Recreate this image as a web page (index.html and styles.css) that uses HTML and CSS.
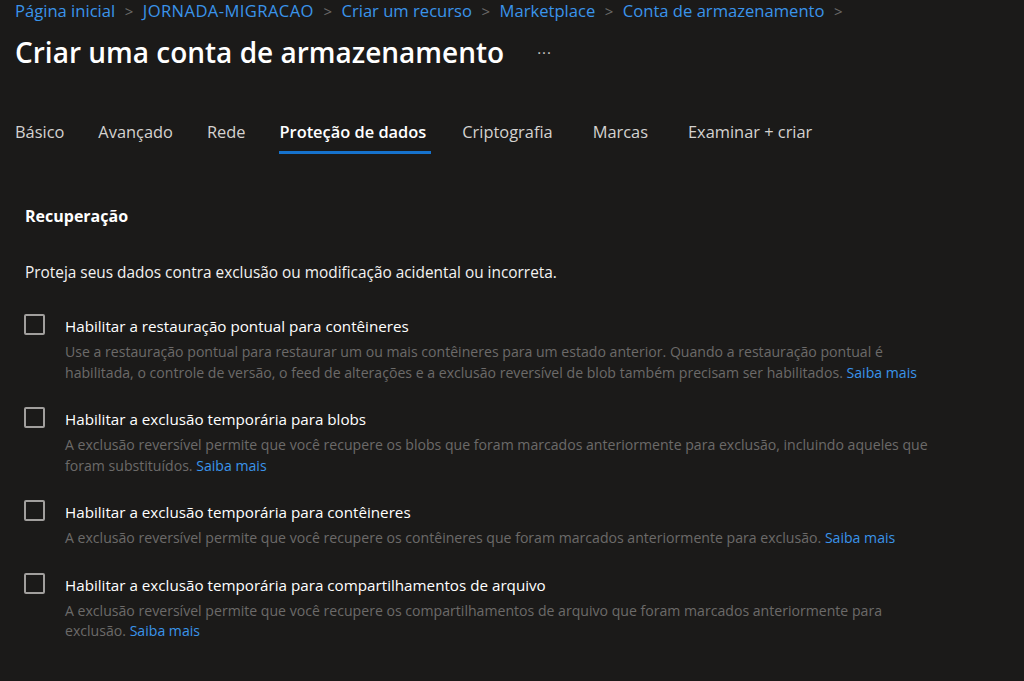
FILE: index.html
```html
<!DOCTYPE html>
<html lang="pt-BR">
<head>
<meta charset="utf-8">
<title>Criar uma conta de armazenamento</title>
<link rel="stylesheet" href="styles.css">
</head>
<body>
<div class="page">
  <nav class="crumbs">
    <a class="crumb">Página inicial</a><span class="sep">&gt;</span>
    <a class="crumb caps">JORNADA-MIGRACAO</a><span class="sep">&gt;</span>
    <a class="crumb">Criar um recurso</a><span class="sep">&gt;</span>
    <a class="crumb">Marketplace</a><span class="sep">&gt;</span>
    <a class="crumb">Conta de armazenamento</a><span class="sep">&gt;</span>
  </nav>
  <header class="title-row">
    <h1 class="title">Criar uma conta de armazenamento</h1>
    <span class="more">···</span>
  </header>
  <div class="tabs">
    <span class="tab">Básico</span>
    <span class="tab">Avançado</span>
    <span class="tab">Rede</span>
    <span class="tab active">Proteção de dados</span>
    <span class="tab wide">Criptografia</span>
    <span class="tab wide">Marcas</span>
    <span class="tab">Examinar + criar</span>
  </div>
  <section class="content">
    <h2 class="section-title">Recuperação</h2>
    <p class="intro">Proteja seus dados contra exclusão ou modificação acidental ou incorreta.</p>
    <div class="options">
      <div class="option">
        <span class="box"></span>
        <div class="text">
          <div class="label">Habilitar a restauração pontual para contêineres</div>
          <div class="desc">Use a restauração pontual para restaurar um ou mais contêineres para um estado anterior. Quando a restauração pontual é habilitada, o controle de versão, o feed de alterações e a exclusão reversível de blob também precisam ser habilitados. <a class="link">Saiba mais</a></div>
        </div>
      </div>
      <div class="option">
        <span class="box"></span>
        <div class="text">
          <div class="label">Habilitar a exclusão temporária para blobs</div>
          <div class="desc">A exclusão reversível permite que você recupere os blobs que foram marcados anteriormente para exclusão, incluindo aqueles que foram substituídos. <a class="link">Saiba mais</a></div>
        </div>
      </div>
      <div class="option">
        <span class="box"></span>
        <div class="text">
          <div class="label">Habilitar a exclusão temporária para contêineres</div>
          <div class="desc">A exclusão reversível permite que você recupere os contêineres que foram marcados anteriormente para exclusão. <a class="link">Saiba mais</a></div>
        </div>
      </div>
      <div class="option">
        <span class="box"></span>
        <div class="text">
          <div class="label">Habilitar a exclusão temporária para compartilhamentos de arquivo</div>
          <div class="desc">A exclusão reversível permite que você recupere os compartilhamentos de arquivo que foram marcados anteriormente para exclusão. <a class="link">Saiba mais</a></div>
        </div>
      </div>
    </div>
  </section>
</div>
</body>
</html>
```

FILE: styles.css
```css
html, body {
  margin: 0;
  padding: 0;
  background: #1b1a19;
}
body {
  font-family: "Open Sans", "Noto Sans", "Liberation Sans", sans-serif;
  color: #ffffff;
  width: 1024px;
  height: 681px;
  overflow: hidden;
}
.page {
  padding: 0 0 0 15px;
}
.crumbs {
  display: flex;
  align-items: center;
  height: 22px;
  font-size: 16.6px;
  line-height: 22px;
}
.crumb {
  color: #3a94ea;
}
.crumb.caps {
  letter-spacing: 0.4px;
}
.sep {
  color: #6b6a69;
  margin: 0 9.5px;
  font-size: 15px;
}
.title-row {
  display: flex;
  align-items: center;
  margin-top: 12px;
  height: 36px;
}
.title {
  margin: 0;
  font-size: 28px;
  font-weight: 600;
  line-height: 36px;
  color: #ffffff;
}
.more {
  margin-left: 33px;
  font-size: 15px;
  color: #c8c6c4;
  letter-spacing: 1px;
}
.tabs {
  display: flex;
  margin-top: 51px;
}
.tab {
  font-size: 16.4px;
  color: #d4d2d0;
  padding: 0 0 8px;
  margin-right: 34px;
  border-bottom: 3px solid transparent;
  line-height: 22px;
}
.tab.active {
  color: #ffffff;
  font-weight: 600;
  padding-right: 5px;
  margin-right: 31px;
  border-bottom-color: #1672cc;
}
.tab.wide {
  margin-right: 40px;
}
.content {
  padding: 51px 0 0 10px;
  width: 910px;
}
.section-title {
  margin: 0;
  font-size: 16px;
  font-weight: 700;
  line-height: 22px;
}
.intro {
  margin: 36px 0 0;
  font-size: 15.4px;
  line-height: 20px;
  color: #f3f2f1;
}
.options {
  display: flex;
  flex-direction: column;
  gap: 25px;
  margin-top: 32px;
}
.option {
  display: flex;
  align-items: flex-start;
}
.box {
  flex: none;
  box-sizing: border-box;
  width: 21px;
  height: 21px;
  margin-top: -1px;
  border: 2px solid #a19f9d;
  border-radius: 2px;
  margin-left: -1px;
  margin-right: 20px;
}
.text {
  flex: 1;
}
.label {
  font-size: 15.2px;
  line-height: 22px;
  color: #ffffff;
}
.desc {
  margin-top: 5px;
  font-size: 14.1px;
  line-height: 20.5px;
  color: #6c6a69;
}
.link {
  color: #3a94ea;
}
```
